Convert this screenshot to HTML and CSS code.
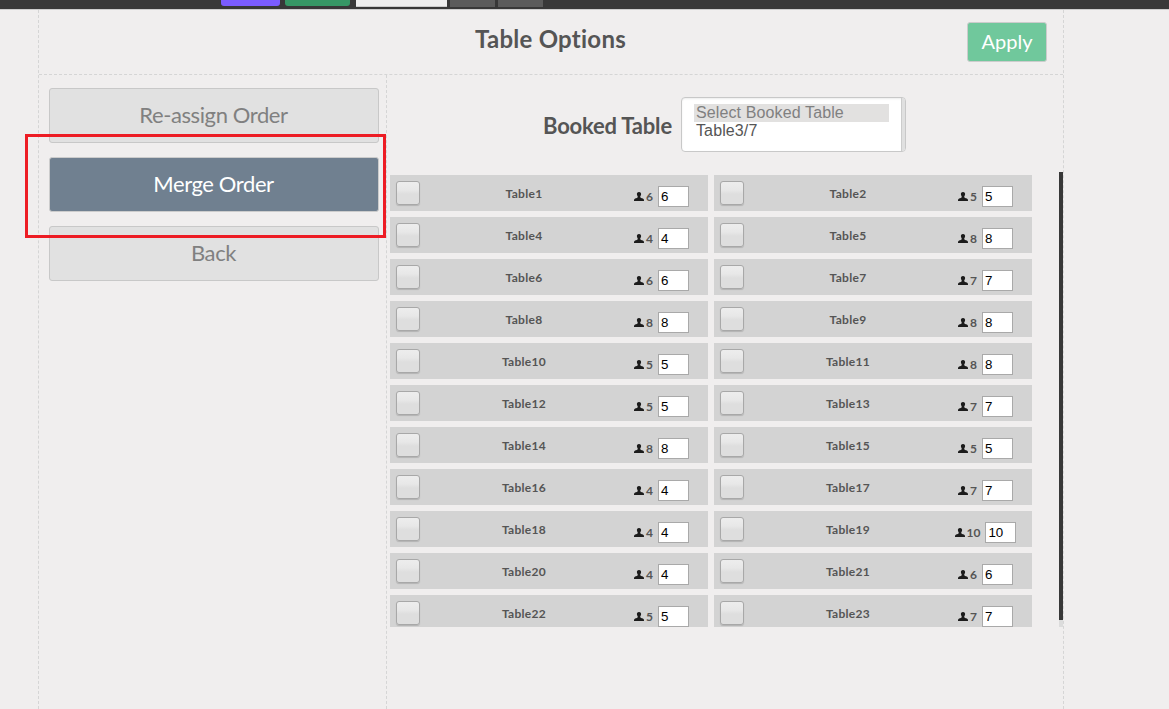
FILE: index.html
```html
<!DOCTYPE html>
<html lang="en">
<head>
<meta charset="utf-8">
<title>Table Options</title>
<link rel="stylesheet" href="styles.css">
</head>
<body>
<div class="topbar">
  <div class="tab tab-purple"></div>
  <div class="tab tab-green"></div>
  <div class="tab tab-light"></div>
  <div class="tab tab-gray"></div>
  <div class="tab tab-gray"></div>
</div>
<div class="panel">
  <header class="header">
    <h1 class="title">Table Options</h1>
    <button class="apply">Apply</button>
  </header>
  <div class="content">
    <nav class="sidebar">
      <button class="option">Re-assign Order</button>
      <button class="option option-active">Merge Order</button>
      <button class="option">Back</button>
      <div class="highlight"></div>
    </nav>
    <main class="main">
      <div class="booked">
        <div class="booked-label">Booked Table</div>
        <div class="select">
          <div class="choices">
            <div class="choice choice-selected">Select Booked Table</div>
            <div class="choice">Table3/7</div>
          </div>
          <div class="select-track"></div>
        </div>
      </div>
      <div class="list">
        <div class="grid" id="tables"></div>
        <div class="scrollbar"><div class="thumb"></div></div>
      </div>
    </main>
  </div>
</div>
<script src="app.js"></script>
</body>
</html>
```
FILE: styles.css
```css
* { box-sizing: border-box; }
body {
  margin: 0;
  height: 709px;
  overflow: hidden;
  background: #f0eeee;
  color: #555;
  font-family: Lato, sans-serif;
  font-variant-ligatures: none;
  display: flex;
  flex-direction: column;
}
button { font-family: inherit; padding: 0 0 2px; margin: 0; }
.topbar {
  height: 10px;
  flex: none;
  background: #383838;
  border-bottom: 1px solid #ccc;
  display: flex;
  align-items: flex-start;
  padding-left: 221px;
}
.tab { height: 7px; }
.tab-purple, .tab-green { height: 6px; border-radius: 0 0 3px 3px; }
.tab-purple { width: 59px; background: #7a5cff; margin-right: 5px; }
.tab-green { width: 65px; background: #369765; margin-right: 6px; }
.tab-light { width: 91px; background: #eee; border-bottom: 1px solid #ccc; margin-right: 3px; }
.tab-gray { width: 45px; background: #5b5b5b; margin-right: 3px; }
.panel {
  width: 1026px;
  margin-left: 38px;
  flex: 1;
  border: dashed #d5d5d5;
  border-width: 0 1px;
  display: flex;
  flex-direction: column;
}
.header {
  height: 65px;
  flex: none;
  border-bottom: 1px dashed #d5d5d5;
  display: grid;
  grid-template-columns: 1fr auto;
  padding-right: 16px;
}
.title {
  margin: 0;
  padding: 14px 0 0 95px;
  font-size: 24px;
  line-height: 30px;
  font-weight: 700;
  letter-spacing: .25px;
  text-align: center;
}
.apply {
  width: 80px;
  height: 40px;
  margin-top: 12px;
  background: #70c89c;
  border: 1px solid #ccc;
  border-radius: 3px;
  color: #fff;
  font-size: 20px;
}
.content { flex: 1; display: flex; min-height: 0; }
.sidebar {
  position: relative;
  width: 348px;
  border-right: 1px dashed #d5d5d5;
  padding: 13px 7px 0 10px;
  display: flex;
  flex-direction: column;
  gap: 14px;
}
.option {
  height: 55px;
  padding-right: 1px;
  background: #e1e1e1;
  border: 1px solid #c8c8c8;
  border-radius: 3px;
  color: #808080;
  font-size: 22px;
  letter-spacing: -.4px;
}
.option-active { background: #708090; color: #fff; border-color: #ccc; }
.highlight {
  position: absolute;
  left: -14px;
  top: 59px;
  width: 361px;
  height: 104px;
  border: 3px solid #ed1c24;
}
.main { flex: 1; padding: 22px 0 0 3px; }
.booked { display: flex; padding-left: 153px; gap: 9px; height: 75px; }
.booked-label {
  width: 129px;
  font-size: 22px;
  line-height: 57px;
  font-weight: 700;
  letter-spacing: -.2px;
  white-space: nowrap;
}
.select {
  width: 225px;
  height: 55px;
  display: flex;
  background: #fff;
  border: 1px solid #c8c8c8;
  border-radius: 4px;
  overflow: hidden;
  box-shadow: inset 0 1px 2px rgba(0, 0, 0, .08);
}
.choices { flex: 1; padding: 6px 12px; }
.choice {
  height: 18px;
  padding-left: 2px;
  font: 16px/18px "Liberation Sans", Arial, sans-serif;
  letter-spacing: .12px;
}
.choice-selected { background: #e2e1e0; color: #808080; }
.select-track { width: 4px; background: #e0e0e0; border-left: 1px solid #ccc; }
.list { height: 455px; display: flex; justify-content: space-between; overflow: hidden; }
.grid {
  padding-top: 3px;
  display: grid;
  grid-template-columns: 318px 318px;
  grid-auto-rows: 36px;
  gap: 6px;
}
.scrollbar { width: 4px; background: #dcdcdc; }
.thumb { height: 448px; background: #383838; }
.table { background: #d3d3d3; display: flex; padding-left: 6px; }
.check {
  width: 24px;
  height: 24px;
  margin-top: 6px;
  border: 1px solid #a8a8a8;
  border-radius: 3px;
  background: linear-gradient(#ededed 0, #e8e8e8 35%, #dedede 55%, #dedede);
  box-shadow: 0 1px 1px rgba(0, 0, 0, .15);
}
.name {
  width: 208px;
  text-align: center;
  font-size: 12px;
  line-height: 38px;
  font-weight: 700;
  letter-spacing: .3px;
}
.seats { width: 67px; display: flex; justify-content: center; }
.person { width: 10px; height: 10px; margin: 17px 2px 0 0; }
.count { font-size: 12px; line-height: 44px; font-weight: 700; margin-right: 5px; height: 36px; }
.field {
  width: 31px;
  height: 21px;
  margin-top: 11px;
  padding-left: 2px;
  background: #fff;
  border: 1px solid #a9a9a9;
  color: #000;
  font: 13.33px/19px "Liberation Sans", Arial, sans-serif;
}
```
FILE: app.js
```js
const tables = [
  [1, 6], [2, 5], [4, 4], [5, 8], [6, 6], [7, 7], [8, 8], [9, 8],
  [10, 5], [11, 8], [12, 5], [13, 7], [14, 8], [15, 5], [16, 4],
  [17, 7], [18, 4], [19, 10], [20, 4], [21, 6], [22, 5], [23, 7]
];
document.getElementById("tables").innerHTML = tables.map(([id, seats]) => `
  <div class="table">
    <div class="check"></div>
    <div class="name">Table${id}</div>
    <div class="seats">
      <svg class="person" viewBox="0 0 10 10"><path fill="#1c1c1c" d="M5 0C6.600 0 7.200 1 7.100 2.300C7 3.500 6.300 3.900 6.200 4.900C6.300 5.800 7.800 6 8.900 6.500C9.900 7 10 7.500 10 9H0C0 7.500.1 7 1.100 6.500C2.200 6 3.700 5.800 3.800 4.900C3.700 3.900 3 3.500 2.900 2.300C2.800 1 3.400 0 5 0Z"/></svg>
      <div class="count">${seats}</div>
      <div class="field">${seats}</div>
    </div>
  </div>`).join("");
```
